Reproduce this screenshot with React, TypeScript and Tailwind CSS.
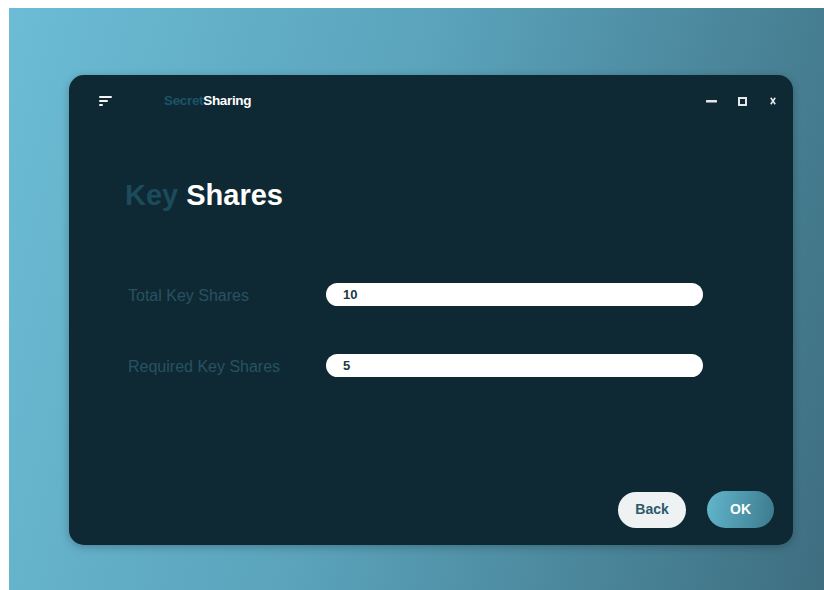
import { useState } from "react"

function MenuIcon() {
  return (
    <svg width="14" height="10" viewBox="0 0 14 10" className="text-gray-100">
      <rect x="0" y="0" width="13" height="2" rx="1" fill="currentColor" />
      <rect x="0" y="4" width="9" height="2" rx="1" fill="currentColor" />
      <rect x="0" y="8" width="4" height="2" rx="1" fill="currentColor" />
    </svg>
  )
}

function WindowControls() {
  return (
    <div className="flex items-center text-gray-200">
      <svg width="11" height="10" viewBox="0 0 11 10" className="mr-[21px]">
        <rect x="0" y="4" width="11" height="2.4" rx="0.5" fill="currentColor" />
      </svg>
      <svg width="9" height="9" viewBox="0 0 9 9" className="mr-[23px]">
        <rect x="1" y="1" width="7" height="7" fill="none" stroke="currentColor" strokeWidth="2" />
      </svg>
      <svg width="6" height="8" viewBox="0 0 6 8">
        <path d="M0.8 0.8 L5.2 7.2 M5.2 0.8 L0.8 7.2" stroke="currentColor" strokeWidth="1.6" />
      </svg>
    </div>
  )
}

function Field({ label, value, onChange }: { label: string; value: string; onChange: (v: string) => void }) {
  return (
    <div className="flex items-center h-[23px]">
      <span className="w-[201px] pl-[3px] text-[16px] text-[#285262] translate-y-[1px]">{label}</span>
      <input
        value={value}
        onChange={(e) => onChange(e.target.value)}
        className="w-[377px] h-[23px] rounded-full bg-white pl-[17px] text-[13px] font-bold text-[#1c3845] outline-none"
      />
    </div>
  )
}

export default function App() {
  const [total, setTotal] = useState("10")
  const [required, setRequired] = useState("5")

  return (
    <div
      className="w-[824px] h-[590px] bg-white pl-[9px] pt-[8px] flex"
      style={{ fontFamily: '"Liberation Sans", Arial, sans-serif' }}
    >
      <div className="flex-1 bg-[linear-gradient(105deg,#6cbcd5_0%,#5aa3bb_45%,#3e6e80_100%)] pl-[60px] pt-[67px]">
        <div className="w-[724px] h-[470px] rounded-[15px] bg-[#0e2933] shadow-[0_2px_8px_rgba(0,0,0,0.25)] flex flex-col">
          {/* title bar */}
          <div className="h-[52px] flex items-center pl-[30px] pr-[17px]">
            <MenuIcon />
            <div className="ml-[51px] text-[13.5px] font-bold tracking-tight">
              <span className="text-[#1a5468]">Secret</span>
              <span className="text-white">Sharing</span>
            </div>
            <div className="ml-auto">
              <WindowControls />
            </div>
          </div>

          <h1 className="mt-[54px] ml-[56px] text-[29px] leading-[29px] font-bold">
            <span className="text-[#1b4b5c]">Key</span> <span className="text-white">Shares</span>
          </h1>

          <div className="mt-[73px] ml-[56px] flex flex-col gap-[48px]">
            <Field label="Total Key Shares" value={total} onChange={setTotal} />
            <Field label="Required Key Shares" value={required} onChange={setRequired} />
          </div>

          <div className="mt-auto flex justify-end items-center gap-[21px] pr-[19px] pb-[17px]">
            <button className="w-[68px] h-[36px] rounded-full bg-[#eef2f3] text-[14px] font-bold text-[#2b5a6b]">
              Back
            </button>
            <button className="w-[67px] h-[37px] rounded-full bg-[linear-gradient(100deg,#62b6cc,#3d7a8e)] text-[14px] font-bold text-white">
              OK
            </button>
          </div>
        </div>
      </div>
    </div>
  )
}
